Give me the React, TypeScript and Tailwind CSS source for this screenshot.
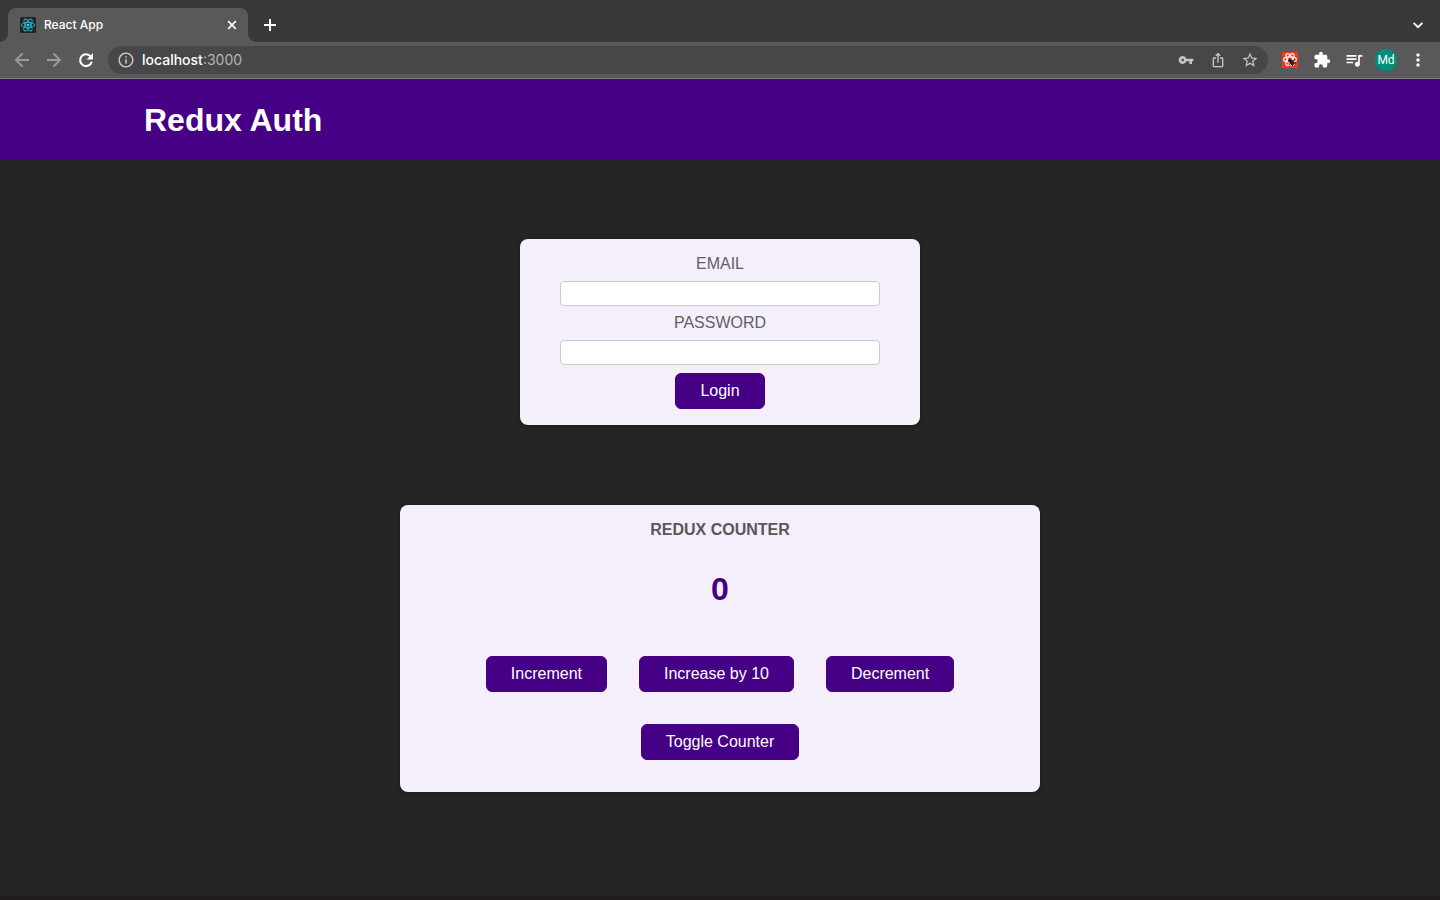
import { useState } from "react";
import type { ButtonHTMLAttributes, ReactNode } from "react";
import { MdExtension, MdInfoOutline, MdIosShare, MdMoreVert, MdQueueMusic, MdStarBorder, MdVpnKey } from "react-icons/md";

function IconButton({ label, className = "", children }: { label: string; className?: string; children: ReactNode }) {
  return (
    <button type="button" aria-label={label} className={`flex size-7 shrink-0 items-center justify-center rounded-full ${className}`}>
      {children}
    </button>
  );
}

function LineIcon({ d, width = 2 }: { d: string; width?: number }) {
  return (
    <svg viewBox="0 0 16 16" className="size-4" fill="none" stroke="currentColor" strokeWidth={width} aria-hidden="true">
      <path d={d} />
    </svg>
  );
}

function ReloadIcon() {
  return (
    <svg viewBox="0 0 16 16" className="size-4" aria-hidden="true">
      <path d="M12.700 4.600A5.900 5.900 0 1 0 13.700 9.700" fill="none" stroke="currentColor" strokeWidth="2.100" />
      <path d="M15 1v6.400H8.600z" fill="currentColor" />
    </svg>
  );
}

function ReactFavicon() {
  return (
    <svg viewBox="0 0 32 32" className="size-4 shrink-0" aria-hidden="true">
      <rect width="32" height="32" rx="3" fill="#222426" />
      <g fill="none" stroke="#30b4d0" strokeWidth="1.9">
        <ellipse cx="16" cy="16" rx="13.4" ry="5.2" />
        <ellipse cx="16" cy="16" rx="13.4" ry="5.2" transform="rotate(60 16 16)" />
        <ellipse cx="16" cy="16" rx="13.4" ry="5.2" transform="rotate(120 16 16)" />
      </g>
      <circle cx="16" cy="16" r="2.7" fill="#4fd8f4" />
    </svg>
  );
}

function DevToolsIcon() {
  return (
    <svg viewBox="0 0 32 32" className="size-4" aria-hidden="true">
      <rect width="32" height="32" fill="#ec3a20" />
      <g fill="none" stroke="#fbe9e6" strokeWidth="2.4">
        <ellipse cx="16" cy="15" rx="13" ry="5.4" />
        <ellipse cx="16" cy="15" rx="13" ry="5.4" transform="rotate(60 16 15)" />
        <ellipse cx="16" cy="15" rx="13" ry="5.4" transform="rotate(120 16 15)" />
      </g>
      <path d="M12 20l4-3M14 25l4-3M21 28l0-4M26 15l-4 3M28 22l-5 0" fill="none" stroke="#1c1210" strokeWidth="1.8" />
      <ellipse cx="20" cy="21" rx="5.600" ry="4.400" transform="rotate(40 20 21)" fill="#1c1210" />
      <circle cx="15.500" cy="16.500" r="2.400" fill="#1c1210" />
      <path d="M22 17l-5 6M24.500 19.500l-4.500 5" fill="none" stroke="#ec3a20" strokeWidth="0.900" />
    </svg>
  );
}

function TabStrip() {
  return (
    <div className="flex h-[42px] items-end bg-[#393939] px-2 text-white">
      <div className="relative flex h-[34px] w-60 items-center gap-2 rounded-t-lg bg-[#595959] pr-2 pl-3">
        <span className="absolute bottom-0 -left-2 size-2 bg-[radial-gradient(circle_at_0_0,transparent_7.5px,#595959_8px)]" />
        <span className="absolute -right-2 bottom-0 size-2 bg-[radial-gradient(circle_at_100%_0,transparent_7.5px,#595959_8px)]" />
        <ReactFavicon />
        <span className="flex-1 text-xs">React App</span>
        <button type="button" aria-label="Close tab" className="flex size-4 items-center justify-center">
          <LineIcon d="M4.200 4.200l7.600 7.600M11.800 4.200l-7.600 7.600" width={1.7} />
        </button>
      </div>
      <div className="flex h-[34px] flex-1 items-center justify-between pl-2">
        <IconButton label="New tab">
          <LineIcon d="M8 2v12M2 8h12" />
        </IconButton>
        <IconButton label="Search tabs">
          <LineIcon d="M3.600 5.800L8 10.200l4.400-4.400" width={1.8} />
        </IconButton>
      </div>
    </div>
  );
}

function Toolbar() {
  return (
    <div className="flex h-[37px] items-center gap-2 border-b border-[#808080] bg-[#595959] px-2 text-white">
      <div className="flex gap-1">
        <IconButton label="Back" className="text-[#9b9b9b]">
          <LineIcon d="M15 8H2.300M8.600 1.300L1.900 8l6.700 6.700" width={1.8} />
        </IconButton>
        <IconButton label="Forward" className="text-[#9b9b9b]">
          <LineIcon d="M1 8h12.700M7.400 1.300L14.100 8l-6.700 6.700" width={1.8} />
        </IconButton>
        <IconButton label="Reload">
          <ReloadIcon />
        </IconButton>
      </div>
      <div className="flex h-7 flex-1 items-center gap-1 rounded-full bg-[#474747] px-1 text-[#c4c6c9]">
        <IconButton label="Site information">
          <MdInfoOutline className="size-[18px]" />
        </IconButton>
        <div role="textbox" aria-label="Address" className="-ml-0.5 flex-1 text-sm font-normal text-[#b4b4b4]">
          <span className="font-medium text-white">localhost</span>:3000
        </div>
        <IconButton label="Saved passwords">
          <MdVpnKey className="size-4" />
        </IconButton>
        <IconButton label="Share">
          <MdIosShare className="size-4" />
        </IconButton>
        <IconButton label="Bookmark">
          <MdStarBorder className="size-[18px]" />
        </IconButton>
      </div>
      <div className="flex gap-1">
        <IconButton label="React developer tools">
          <DevToolsIcon />
        </IconButton>
        <IconButton label="Extensions">
          <MdExtension className="size-[18px]" />
        </IconButton>
        <IconButton label="Media">
          <MdQueueMusic className="size-5" />
        </IconButton>
        <IconButton label="Profile">
          <span className="flex size-[22px] items-center justify-center rounded-full bg-[#008f7a] font-['Roboto',sans-serif] text-xs font-normal">
            Md
          </span>
        </IconButton>
        <IconButton label="Menu">
          <MdMoreVert className="size-5" />
        </IconButton>
      </div>
    </div>
  );
}

function Button({ children, ...props }: ButtonHTMLAttributes<HTMLButtonElement>) {
  return (
    <button
      {...props}
      className="cursor-pointer rounded-md border border-[#450086] bg-[#450086] px-6 py-2 leading-[18px] text-white"
    >
      {children}
    </button>
  );
}

function Field({ id, label, type }: { id: string; label: string; type: string }) {
  return (
    <div className="mb-2 flex flex-col items-center gap-2">
      <label htmlFor={id} className="leading-[18px] text-[#616161]">
        {label}
      </label>
      <input id={id} type={type} className="h-[25px] w-80 max-w-full rounded border border-[#cccccc] bg-white px-1" />
    </div>
  );
}

function LoginForm() {
  return (
    <form
      onSubmit={(event) => event.preventDefault()}
      className="mx-auto mt-20 w-[400px] max-w-full rounded-lg bg-[#f5effc] p-4 text-center shadow-[0_1px_4px_rgba(0,0,0,0.3)]"
    >
      <Field id="email" label="EMAIL" type="email" />
      <Field id="password" label="PASSWORD" type="password" />
      <Button type="submit">Login</Button>
    </form>
  );
}

function Counter() {
  const [count, setCount] = useState(0);
  const [visible, setVisible] = useState(true);

  return (
    <section className="mx-auto mt-20 w-[640px] max-w-full rounded-lg bg-[#f5effc] px-4 pt-4 pb-8 text-center shadow-[0_1px_4px_rgba(0,0,0,0.3)]">
      <h2 className="leading-[18px] font-bold text-[#575757]">REDUX COUNTER</h2>
      {visible && <div className="mt-8 text-[32px] leading-[37px] font-bold text-[#450086]">{count}</div>}
      <div className="mt-12 mb-8 flex flex-wrap justify-center gap-8">
        <Button onClick={() => setCount(count + 1)}>Increment</Button>
        <Button onClick={() => setCount(count + 10)}>Increase by 10</Button>
        <Button onClick={() => setCount(count - 1)}>Decrement</Button>
      </div>
      <Button onClick={() => setVisible(!visible)}>Toggle Counter</Button>
    </section>
  );
}

export default function App() {
  return (
    <div className="flex min-h-screen flex-col bg-[#252525] font-['Liberation_Sans',Arial,sans-serif]">
      <div className="font-['Inter',sans-serif] font-medium">
        <TabStrip />
        <Toolbar />
      </div>
      <header className="flex h-20 items-center bg-[#450086] px-[10%] pt-0.5 text-white">
        <h1 className="text-[32px] leading-10 font-bold">Redux Auth</h1>
      </header>
      <main className="flex-1">
        <LoginForm />
        <Counter />
      </main>
      <div className="h-1 bg-[#221c1f]" />
    </div>
  );
}
